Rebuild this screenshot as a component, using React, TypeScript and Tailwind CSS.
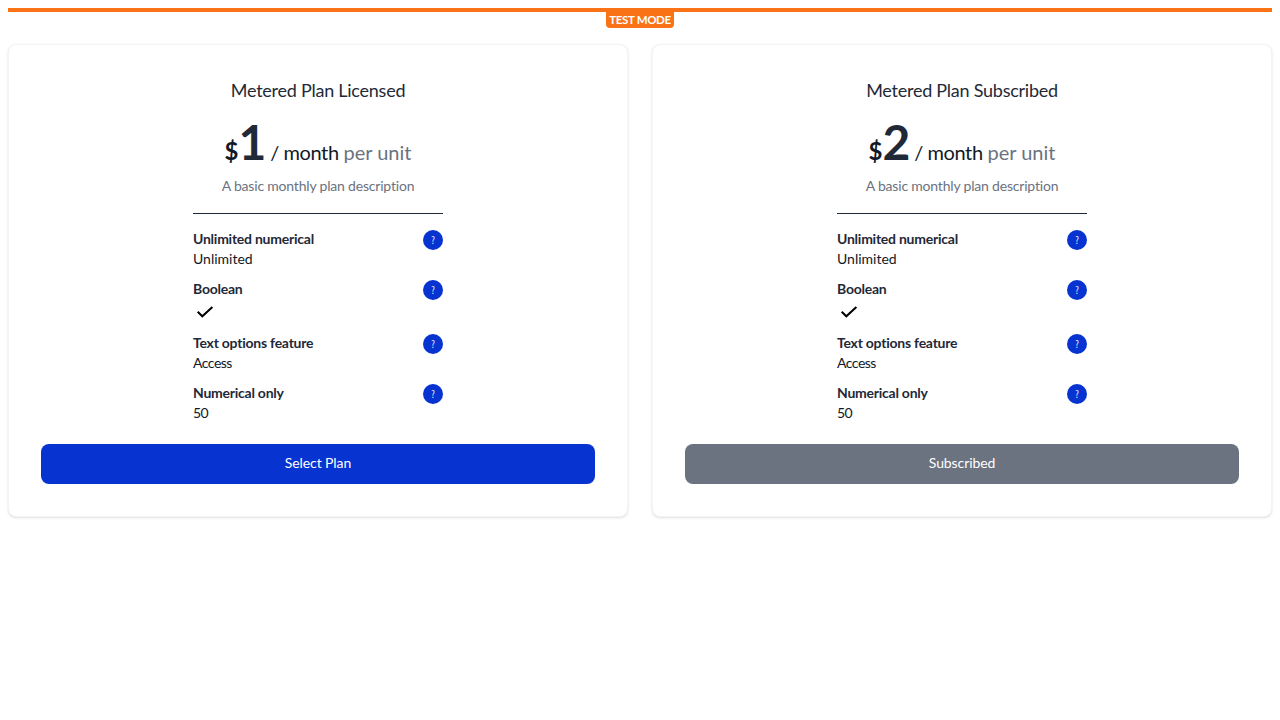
import type { ReactNode } from "react";

type Feature = { label: string; value: ReactNode; gap: string };

const Check = () => (
  <svg className="block h-6 w-6" viewBox="0 0 24 24" fill="none" stroke="#000" strokeWidth="2">
    <path d="M4.7 11.7L9.3 16.3L19.4 6.9" />
  </svg>
);

const features: Feature[] = [
  { label: "Unlimited numerical", value: "Unlimited", gap: "" },
  { label: "Boolean", value: <Check />, gap: "" },
  { label: "Text options feature", value: "Access", gap: "tracking-[-0.5px]" },
  { label: "Numerical only", value: "50", gap: "tracking-[-0.5px]" },
];

function Plan({ name, price, action, color }: { name: string; price: string; action: string; color: string }) {
  return (
    <section className="flex h-[473px] flex-col items-center rounded-lg border border-gray-100 bg-white p-8 shadow-sm">
      <h2 className="h-7 whitespace-nowrap text-lg leading-[26px] tracking-[-0.25px] text-[#1f2937]">{name}</h2>
      <p className="mt-3 flex h-12 w-[187px] items-baseline whitespace-nowrap text-[#111827]">
        <span className="w-[14px] text-2xl leading-[50px] font-bold">$</span>
        <span className="w-[32px] text-5xl leading-[50px] font-bold text-[#1f2937]">{price}</span>
        <span className="w-[74px] text-xl leading-[50px] tracking-[-0.4px]">/ month</span>
        <span className="text-xl leading-[50px] text-[#6b7280]">per unit</span>
      </p>
      <p className="mt-3 h-5 whitespace-nowrap text-sm leading-[18px] tracking-[-0.19px] text-[#6b7280]">
        A basic monthly plan description
      </p>
      <hr className="mt-4 w-[250px] border-t border-[#1f2937]" />
      <ul className="mt-4 flex w-[250px] flex-col gap-2.5 text-sm leading-[18px] text-[#111827]">
        {features.map((f) => (
          <li key={f.label}>
            <div className="flex h-5 justify-between">
              <span className="font-bold tracking-[-0.24px] whitespace-nowrap text-[#1f2937]">{f.label}</span>
              <span className="flex h-5 w-5 items-center justify-center rounded-full bg-[#0733d1] font-['Open_Sans',sans-serif] text-[10px] leading-5 text-white [font-stretch:75%]">
                ?
              </span>
            </div>
            <div className={"min-h-5 " + f.gap}>{f.value}</div>
          </li>
        ))}
      </ul>
      <button className={"mt-5 flex h-10 w-full shrink-0 justify-center rounded-lg pt-2.5 text-sm leading-[18px] tracking-[-0.1px] text-white " + color}>
        {action}
      </button>
    </section>
  );
}

export default function App() {
  return (
    <main className="min-h-screen bg-white p-2 font-['Lato',sans-serif] [font-variant-ligatures:none]">
      <div className="flex h-5 flex-col items-center border-t-4 border-[#f97316]">
        <span className="flex h-4 w-[68px] items-center justify-center rounded-b bg-[#f97316] text-[11.5px] leading-4 font-bold tracking-[-0.35px] whitespace-nowrap text-white">
          TEST MODE
        </span>
      </div>
      <div className="mt-4 grid grid-cols-2 gap-6">
        <Plan name="Metered Plan Licensed" price="1" action="Select Plan" color="bg-[#0733d1]" />
        <Plan name="Metered Plan Subscribed" price="2" action="Subscribed" color="bg-[#6b7280]" />
      </div>
    </main>
  );
}
